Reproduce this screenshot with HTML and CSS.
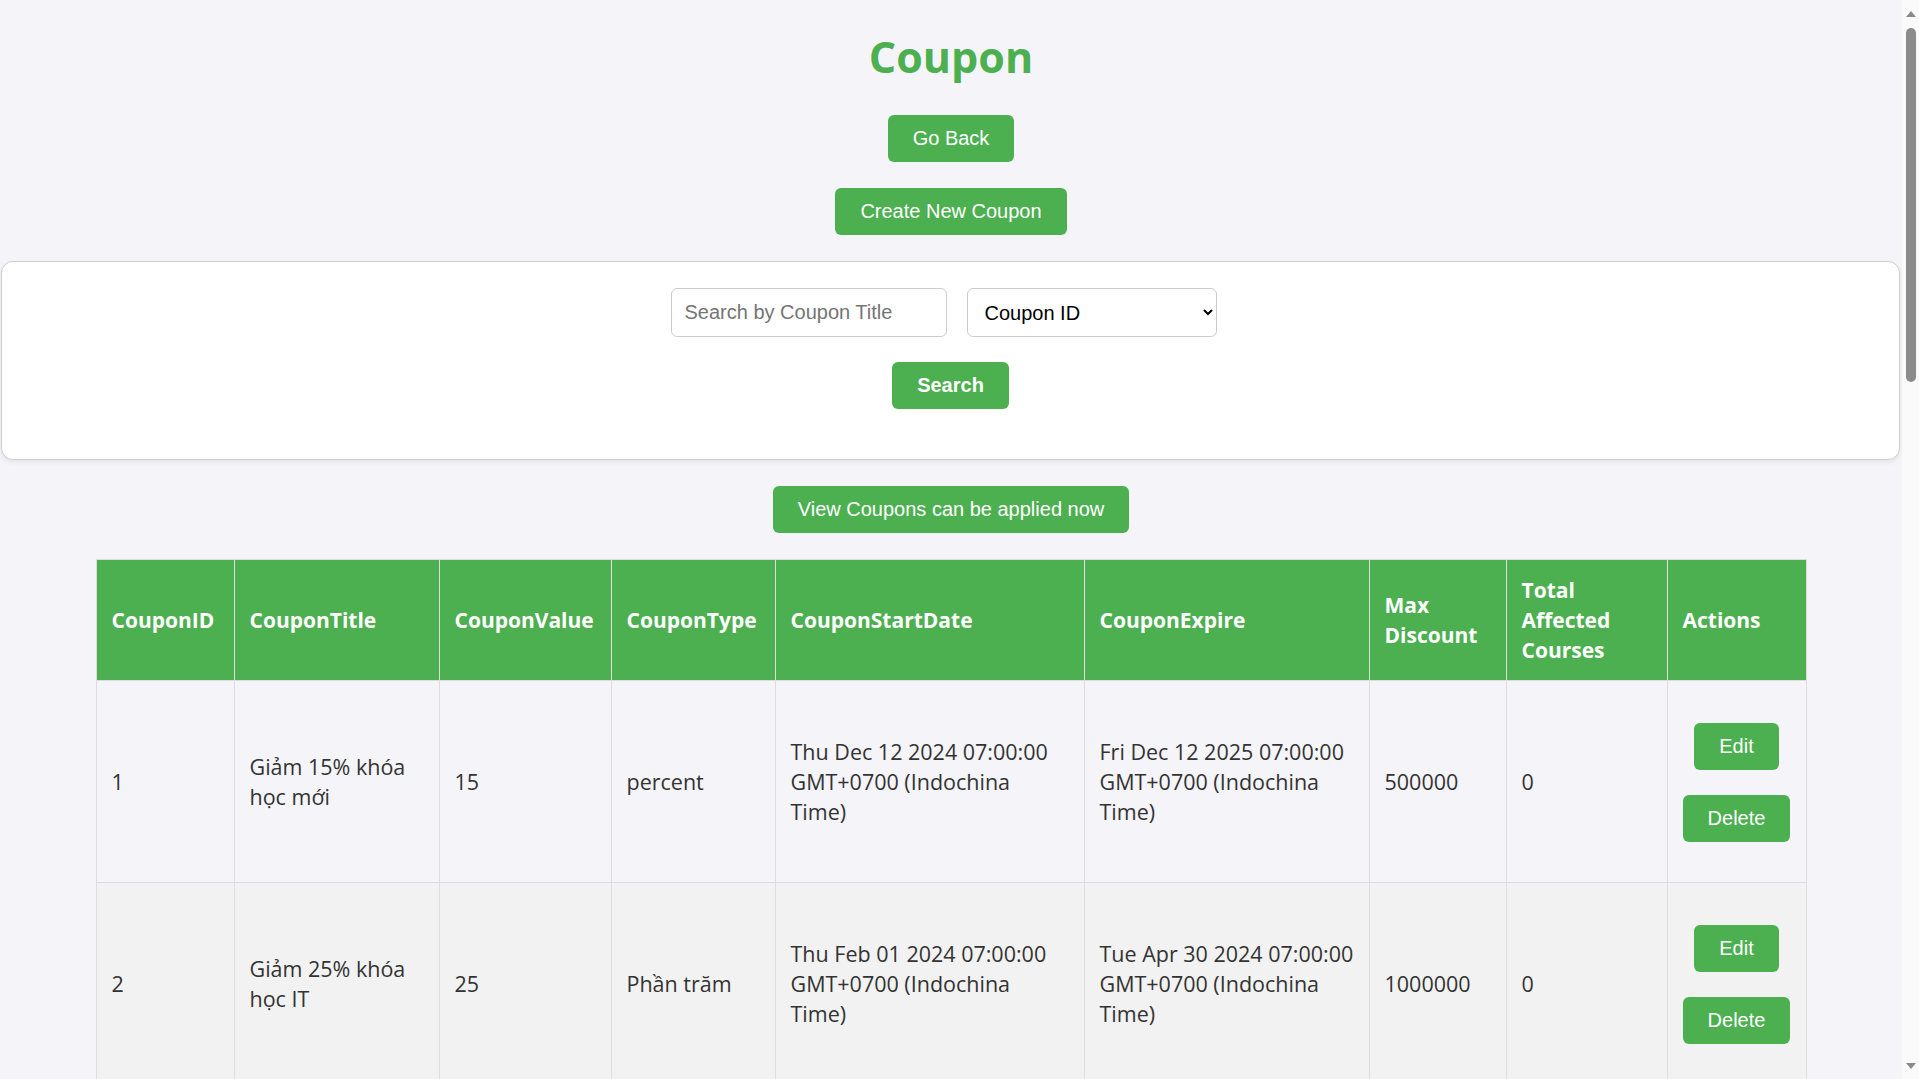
FILE: index.html
```html
<!DOCTYPE html>
<html lang="vi">
<head>
<meta charset="utf-8">
<title>Coupon</title>
<link rel="stylesheet" href="styles.css">
</head>
<body>
<div class="page">
  <h1 class="title">Coupon</h1>
  <div class="top-actions">
    <button class="btn">Go Back</button>
    <button class="btn">Create New Coupon</button>
  </div>

  <div class="search-card">
    <div class="search-fields">
      <input class="field field-text" type="text" placeholder="Search by Coupon Title">
      <select class="field field-select">
        <option>Coupon ID</option>
        <option>Coupon Title</option>
      </select>
    </div>
    <button class="btn btn-bold">Search</button>
  </div>

  <div class="view-row">
    <button class="btn">View Coupons can be applied now</button>
  </div>

  <table class="coupons">
    <thead>
      <tr>
        <th class="c-id">CouponID</th>
        <th class="c-title">CouponTitle</th>
        <th class="c-value">CouponValue</th>
        <th class="c-type">CouponType</th>
        <th class="c-start">CouponStartDate</th>
        <th class="c-expire">CouponExpire</th>
        <th class="c-max">Max Discount</th>
        <th class="c-total">Total Affected Courses</th>
        <th class="c-actions">Actions</th>
      </tr>
    </thead>
    <tbody>
      <tr>
        <td>1</td>
        <td>Giảm 15% khóa học mới</td>
        <td>15</td>
        <td>percent</td>
        <td>Thu Dec 12 2024 07:00:00 GMT+0700 (Indochina Time)</td>
        <td>Fri Dec 12 2025 07:00:00 GMT+0700 (Indochina Time)</td>
        <td>500000</td>
        <td>0</td>
        <td class="actions">
          <div class="action-stack">
            <button class="btn">Edit</button>
            <button class="btn">Delete</button>
          </div>
        </td>
      </tr>
      <tr>
        <td>2</td>
        <td>Giảm 25% khóa học IT</td>
        <td>25</td>
        <td>Phần trăm</td>
        <td>Thu Feb 01 2024 07:00:00 GMT+0700 (Indochina Time)</td>
        <td>Tue Apr 30 2024 07:00:00 GMT+0700 (Indochina Time)</td>
        <td>1000000</td>
        <td>0</td>
        <td class="actions">
          <div class="action-stack">
            <button class="btn">Edit</button>
            <button class="btn">Delete</button>
          </div>
        </td>
      </tr>
    </tbody>
  </table>
</div>

<div class="scrollbar" aria-hidden="true">
  <span class="sb-arrow sb-up"></span>
  <span class="sb-thumb"></span>
  <span class="sb-arrow sb-down"></span>
</div>
</body>
</html>
```

FILE: styles.css
```css
html,
body {
  margin: 0;
  height: 100%;
}

body {
  display: flex;
  overflow: hidden;
  background: #f4f4f9;
  font-family: "Open Sans", "Noto Sans", sans-serif;
  color: #333333;
}

/* main page column */
.page {
  flex: 1;
  min-width: 0;
  overflow: hidden;
  padding-top: 28px;
}

/* browser scrollbar strip */
.scrollbar {
  width: 17px;
  flex-shrink: 0;
  background: #fafafa;
  display: flex;
  flex-direction: column;
  align-items: center;
}

.sb-arrow {
  width: 0;
  height: 0;
  border-left: 5px solid transparent;
  border-right: 5px solid transparent;
}

.sb-up {
  margin-top: 11px;
  border-bottom: 6px solid #8b8b8b;
}

.sb-thumb {
  margin-top: 11px;
  width: 10px;
  height: 354px;
  border-radius: 5px;
  background: #8b8b8b;
}

.sb-down {
  margin-top: auto;
  margin-bottom: 10px;
  border-top: 6px solid #8b8b8b;
}

.title {
  margin: 0 0 30px;
  text-align: center;
  font-size: 43px;
  line-height: 57px;
  font-weight: 700;
  color: #4caf50;
}

.btn {
  font-family: "Liberation Sans", Arial, sans-serif;
  font-size: 20px;
  line-height: 23px;
  padding: 12px 25px;
  border: 0;
  border-radius: 6px;
  background: #4caf50;
  color: #ffffff;
  cursor: pointer;
}

.btn-bold {
  font-weight: 700;
}

.top-actions {
  display: flex;
  flex-direction: column;
  align-items: center;
  gap: 26px;
}

.search-card {
  margin: 26px 2px 0 1px;
  padding: 26px 20px 50px;
  background: #ffffff;
  border: 1px solid #d0d0d0;
  border-radius: 12px;
  box-shadow: 0 2px 5px rgba(0, 0, 0, 0.08);
  display: flex;
  flex-direction: column;
  align-items: center;
  gap: 25px;
}

.search-fields {
  display: flex;
  justify-content: center;
  gap: 20px;
  padding-right: 14px;
}

.field {
  box-sizing: border-box;
  height: 49px;
  font-family: "Liberation Sans", Arial, sans-serif;
  font-size: 20px;
  border: 1px solid #cccccc;
  border-radius: 6px;
  background: #ffffff;
  color: #000000;
}

.field-text {
  width: 276px;
  padding: 12px 13px;
}

.field-text::placeholder {
  color: #757575;
}

.field-select {
  width: 250px;
  padding: 0 12px 0 13px;
}

.view-row {
  margin-top: 26px;
  display: flex;
  justify-content: center;
}

.coupons {
  width: 1710px;
  margin: 26px auto 0;
  border-collapse: collapse;
  table-layout: fixed;
  font-size: 21.5px;
  line-height: 30px;
}

.coupons th,
.coupons td {
  box-sizing: border-box;
  border: 1px solid #dddddd;
  padding: 15px;
  text-align: left;
  vertical-align: middle;
}

.coupons th {
  background: #4caf50;
  color: #ffffff;
  font-weight: 700;
  font-size: 21px;
}

.coupons tbody tr:nth-child(even) {
  background: #f2f2f2;
}

.c-id { width: 138px; }
.c-title { width: 205px; }
.c-value { width: 172px; }
.c-type { width: 164px; }
.c-start { width: 309px; }
.c-expire { width: 285px; }
.c-max { width: 137px; }
.c-total { width: 161px; }
.c-actions { width: 139px; }

.coupons td.actions {
  text-align: center;
}

.action-stack {
  display: flex;
  flex-direction: column;
  align-items: center;
  gap: 25px;
  padding: 27px 0 25px;
}

.action-stack .btn {
  white-space: nowrap;
}
```
